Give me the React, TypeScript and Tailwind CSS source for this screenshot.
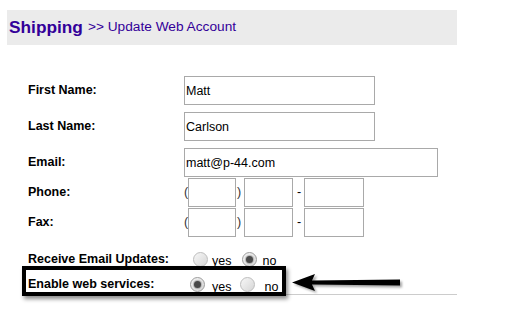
import React from 'react';

function Radio({ checked }: { checked?: boolean }) {
  return (
    <span
      className={`flex h-[15px] w-[15px] shrink-0 items-center justify-center rounded-full border bg-linear-to-br from-[#f7f7f7] to-[#d6d6d6] ${
        checked ? 'border-[#9c9c9c]' : 'border-[#bdbdbd]'
      }`}
    >
      {checked && <span className="h-[7px] w-[7px] rounded-full bg-[#4a4a4a] shadow-[0_0_1px_1px_rgba(74,74,74,0.35)]" />}
    </span>
  );
}

const boxCls =
  'h-[29px] border border-[#a9a9a9] bg-white px-[1px] text-[12.5px] text-black outline-none';

function Row({ label, children, className = '' }: { label: string; children: React.ReactNode; className?: string }) {
  return (
    <div className={`flex items-center ${className}`}>
      <div className="w-[156px] shrink-0 font-bold">{label}</div>
      {children}
    </div>
  );
}

function PhoneBoxes() {
  return (
    <div className="flex items-center">
      <span className="w-[4px] text-[#333]">(</span>
      <input className={`${boxCls} w-[48px]`} readOnly />
      <span className="ml-[1px] w-[7px] text-[#333]">)</span>
      <input className={`${boxCls} w-[49px]`} readOnly />
      <span className="ml-[4px] w-[7px]">-</span>
      <input className={`${boxCls} w-[60px]`} readOnly />
    </div>
  );
}

export default function App() {
  return (
    <div className="relative h-[327px] w-[509px] overflow-hidden bg-white font-['Liberation_Sans',Arial,sans-serif] text-[12.5px] text-black">
      {/* Title bar */}
      <div className="ml-[7px] mt-[10px] flex h-[35px] w-[450px] items-center bg-[#ebebeb] pl-[2px] text-[#330099]">
        <span className="text-[17.3px] font-bold">Shipping</span>
        <span className="ml-[5px] text-[13.7px]">&gt;&gt; Update Web Account</span>
      </div>

      {/* Form */}
      <div className="mt-[31px] pl-[28px]">
        <Row label="First Name:">
          <input className={`${boxCls} w-[191px]`} value="Matt" readOnly />
        </Row>
        <Row label="Last Name:" className="mt-[7px]">
          <input className={`${boxCls} w-[191px]`} value="Carlson" readOnly />
        </Row>
        <Row label="Email:" className="mt-[7px]">
          <input className={`${boxCls} w-[254px]`} value="matt@p-44.com" readOnly />
        </Row>
        <Row label="Phone:" className="mt-[1px]">
          <PhoneBoxes />
        </Row>
        <Row label="Fax:" className="mt-[1px]">
          <PhoneBoxes />
        </Row>

        <Row label="Receive Email Updates:" className="mt-[13px] h-[18px]">
          <div className="ml-[9px] flex items-center">
            <Radio />
            <span className="ml-[4px] translate-y-[2px]">yes</span>
            <span className="ml-[11px]">
              <Radio checked />
            </span>
            <span className="ml-[5px] translate-y-[2px]">no</span>
          </div>
        </Row>
        <Row label="Enable web services:" className="mt-[7px] h-[18px]">
          <div className="ml-[6px] flex items-center">
            <Radio checked />
            <span className="ml-[7px] translate-y-[3px]">yes</span>
            <span className="ml-[9px]">
              <Radio />
            </span>
            <span className="ml-[9px] translate-y-[3px]">no</span>
          </div>
        </Row>
        <div className="mt-[1px] w-[429px] border-t border-[#cccccc]" />
      </div>

      {/* Annotation box */}
      <div className="pointer-events-none absolute left-[22px] top-[266px] h-[30px] w-[264px] border-4 border-black shadow-[2px_3px_4px_rgba(0,0,0,0.45)]" />

      {/* Annotation arrow */}
      <svg className="absolute left-[290px] top-[268px]" width="118" height="30" viewBox="0 0 118 30">
        <defs>
          <filter id="sh" x="-10%" y="-50%" width="130%" height="200%">
            <feGaussianBlur stdDeviation="1.2" />
          </filter>
        </defs>
        <path
          d="M2 14.5 L25 6 L22 12.5 L110 11.5 L110 17.5 L22 16.5 L25 23 Z"
          fill="rgba(0,0,0,0.35)"
          transform="translate(2 2)"
          filter="url(#sh)"
        />
        <path d="M2 14.5 L25 6 L22 12.5 L110 11.5 L110 17.5 L22 16.5 L25 23 Z" fill="#000" />
      </svg>
    </div>
  );
}
